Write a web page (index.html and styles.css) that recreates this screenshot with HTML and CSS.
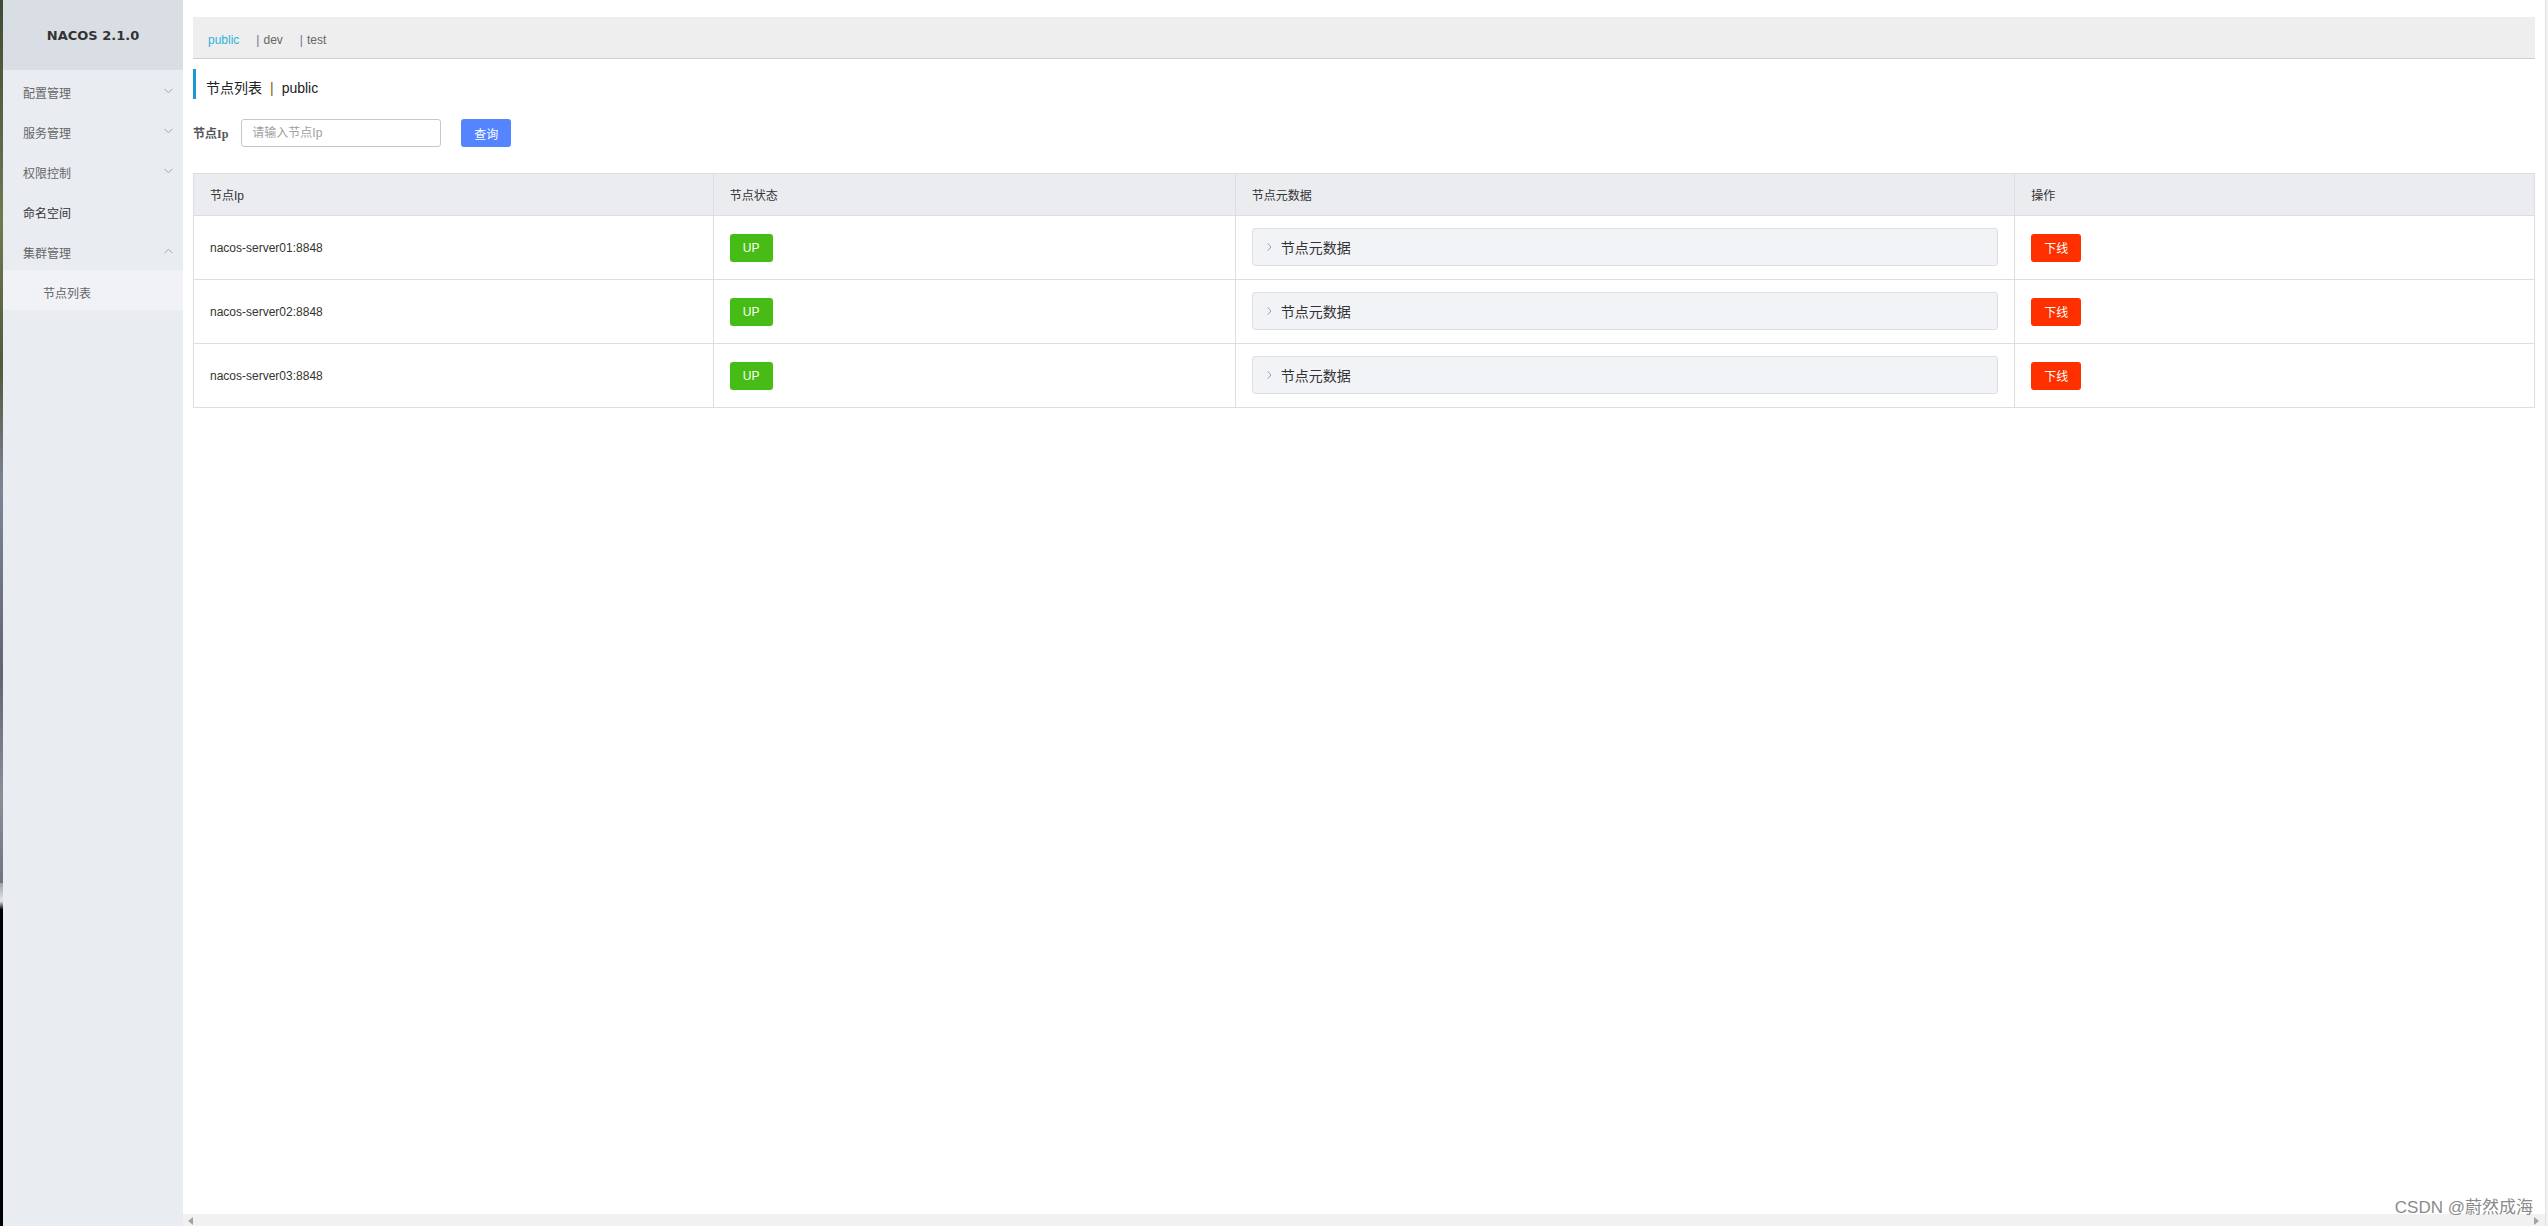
FILE: index.html
```html
<!DOCTYPE html>
<html lang="zh-CN">
<head>
<meta charset="utf-8">
<title>Nacos - 节点列表</title>
<link rel="stylesheet" href="styles.css">
</head>
<body>
<div class="app">
  <div class="desk-strip"></div>
  <aside class="sidebar">
    <div class="brand">NACOS 2.1.0</div>
    <ul class="menu">
      <li class="menu-item"><span>配置管理</span><svg class="chev" width="9" height="6" viewBox="0 0 9 6"><path d="M0.5 0.8 L4.5 4.8 L8.5 0.8" fill="none" stroke="#a0a4ab" stroke-width="1"/></svg></li>
      <li class="menu-item"><span>服务管理</span><svg class="chev" width="9" height="6" viewBox="0 0 9 6"><path d="M0.5 0.8 L4.5 4.8 L8.5 0.8" fill="none" stroke="#a0a4ab" stroke-width="1"/></svg></li>
      <li class="menu-item"><span>权限控制</span><svg class="chev" width="9" height="6" viewBox="0 0 9 6"><path d="M0.5 0.8 L4.5 4.8 L8.5 0.8" fill="none" stroke="#a0a4ab" stroke-width="1"/></svg></li>
      <li class="menu-item leaf"><span>命名空间</span></li>
      <li class="menu-item"><span>集群管理</span><svg class="chev" width="9" height="6" viewBox="0 0 9 6"><path d="M0.5 5.2 L4.5 1.2 L8.5 5.2" fill="none" stroke="#a0a4ab" stroke-width="1"/></svg></li>
      <li class="sub-item">节点列表</li>
    </ul>
  </aside>
  <main class="main">
    <div class="content">
      <div class="ns-bar">
        <span class="ns active">public</span>
        <span class="ns"><span class="pipe">|</span>dev</span>
        <span class="ns"><span class="pipe">|</span>test</span>
      </div>
      <div class="page-title">
        <span class="title-text">节点列表<span class="title-sep">|</span>public</span>
      </div>
      <form class="search">
        <label class="search-label">节点Ip</label>
        <input class="search-input" type="text" placeholder="请输入节点Ip">
        <button class="btn-primary" type="button">查询</button>
      </form>
      <table class="grid">
        <colgroup>
          <col class="c1"><col class="c2"><col class="c3"><col class="c4">
        </colgroup>
        <thead>
          <tr><th>节点Ip</th><th>节点状态</th><th>节点元数据</th><th>操作</th></tr>
        </thead>
        <tbody>
          <tr>
            <td>nacos-server01:8848</td>
            <td><span class="tag-up">UP</span></td>
            <td><div class="meta"><svg class="meta-chev" width="5" height="8" viewBox="0 0 5 8"><path d="M0.8 0.5 L4 4 L0.8 7.5" fill="none" stroke="#9a9ea6" stroke-width="1"/></svg><span>节点元数据</span></div></td>
            <td><button class="btn-danger" type="button">下线</button></td>
          </tr>
          <tr>
            <td>nacos-server02:8848</td>
            <td><span class="tag-up">UP</span></td>
            <td><div class="meta"><svg class="meta-chev" width="5" height="8" viewBox="0 0 5 8"><path d="M0.8 0.5 L4 4 L0.8 7.5" fill="none" stroke="#9a9ea6" stroke-width="1"/></svg><span>节点元数据</span></div></td>
            <td><button class="btn-danger" type="button">下线</button></td>
          </tr>
          <tr>
            <td>nacos-server03:8848</td>
            <td><span class="tag-up">UP</span></td>
            <td><div class="meta"><svg class="meta-chev" width="5" height="8" viewBox="0 0 5 8"><path d="M0.8 0.5 L4 4 L0.8 7.5" fill="none" stroke="#9a9ea6" stroke-width="1"/></svg><span>节点元数据</span></div></td>
            <td><button class="btn-danger" type="button">下线</button></td>
          </tr>
        </tbody>
      </table>
    </div>
    <div class="hscroll">
      <svg width="5" height="8" viewBox="0 0 5 8"><path d="M5 0 L0 4 L5 8 Z" fill="#a3a3a3"/></svg>
      <svg width="5" height="8" viewBox="0 0 5 8"><path d="M0 0 L5 4 L0 8 Z" fill="#a3a3a3"/></svg>
    </div>
  </main>
  <div class="vscroll"></div>
  <div class="watermark">CSDN @蔚然成海</div>
</div>
</body>
</html>
```
FILE: styles.css
```css
* { box-sizing: border-box; }
html, body { margin: 0; padding: 0; }
body {
  font-family: "Liberation Sans", "Noto Sans CJK SC", sans-serif;
  font-size: 12px;
  color: #333;
  background: #fff;
}
.app {
  position: relative;
  display: flex;
  height: 1226px;
  overflow: hidden;
}
.desk-strip {
  width: 3px;
  flex: none;
  background: linear-gradient(180deg, #3f4a35 0%, #6d7a52 18%, #4e5a3c 30%, #7c8596 40%, #5f6672 55%, #8a8f98 65%, #6e7480 72%, #9ea2a8 72%, #e6e6e6 73.5%, #000 74.2%, #000 100%);
}
.sidebar {
  width: 180px;
  flex: none;
  background: #e9edf2;
  display: flex;
  flex-direction: column;
}
.brand {
  height: 70px;
  background: #d9dde4;
  display: flex;
  align-items: center;
  justify-content: center;
  font-family: "DejaVu Sans", "Liberation Sans", sans-serif;
  font-weight: bold;
  font-size: 13px;
  color: #333;
}
.menu {
  list-style: none;
  margin: 0;
  padding: 0;
}
.menu-item {
  height: 40px;
  padding: 5px 10px 0 20px;
  display: flex;
  align-items: center;
  justify-content: space-between;
  color: #666;
  font-size: 12px;
}
.menu-item.leaf { color: #333; }
.chev { margin-bottom: 4px; }
.sub-item {
  height: 40px;
  padding: 5px 0 0 40px;
  display: flex;
  align-items: center;
  background: #f0f2f6;
  color: #666;
  font-size: 12px;
}
.main {
  flex: 1;
  display: flex;
  flex-direction: column;
  min-width: 0;
}
.content {
  flex: 1;
  padding: 17px 10px 0;
}
.ns-bar {
  height: 42px;
  background: #eeeeee;
  border-bottom: 1px solid #cfcfcf;
  display: flex;
  align-items: center;
  padding: 4px 15px 0;
  gap: 17px;
  font-size: 12px;
  color: #666;
}
.ns.active { color: #2fb3d8; }
.pipe { color: #6a7390; margin-right: 4px; }
.page-title {
  margin-top: 10px;
  height: 30px;
  border-left: 3px solid #189ad3;
  padding-left: 10px;
}
.title-text {
  display: block;
  padding-top: 8px;
  line-height: 22px;
  font-size: 14px;
  color: #222;
}
.title-sep { margin: 0 8px; color: #7a5a20; }
.search {
  margin: 20px 0 0;
  display: flex;
  align-items: center;
  height: 28px;
}
.search-label {
  font-family: "Liberation Serif", "Noto Sans CJK SC", serif;
  font-weight: bold;
  font-size: 12px;
  color: #555;
  margin-right: 13px;
}
.search-input {
  width: 200px;
  height: 28px;
  border: 1px solid #c4c6cf;
  border-radius: 3px;
  padding: 0 10px;
  font-family: inherit;
  font-size: 12px;
  color: #333;
  outline: none;
}
.search-input::placeholder { color: #a0a0a0; }
.btn-primary {
  margin-left: 20px;
  width: 50px;
  height: 28px;
  border: none;
  border-radius: 3px;
  background: #5584ff;
  color: #fff;
  font-family: inherit;
  font-size: 12px;
  padding: 0;
}
.grid {
  margin-top: 26px;
  width: 100%;
  table-layout: fixed;
  border-collapse: separate;
  border-spacing: 0;
  border-top: 1px solid #dcdee3;
  border-left: 1px solid #dcdee3;
}
.c1 { width: 22.2%; }
.c2 { width: 22.3%; }
.c3 { width: 33.3%; }
.c4 { width: 22.2%; }
.grid th, .grid td {
  border-right: 1px solid #dcdee3;
  border-bottom: 1px solid #dcdee3;
  padding: 0 16px;
  text-align: left;
  vertical-align: middle;
  font-size: 12px;
  color: #333;
}
.grid th {
  height: 42px;
  background: #ebecf0;
  font-weight: normal;
}
.grid td { height: 64px; }
.tag-up {
  display: inline-flex;
  align-items: center;
  justify-content: center;
  width: 43px;
  height: 28px;
  border-radius: 3px;
  background: #46bc15;
  color: #fff;
  font-size: 12px;
  vertical-align: middle;
}
.meta {
  height: 38px;
  margin-top: -1px;
  background: #f2f3f7;
  border: 1px solid #dcdee3;
  border-radius: 3px;
  display: flex;
  align-items: center;
  padding-left: 14px;
  font-size: 14px;
  color: #333;
}
.meta-chev { margin-right: 9px; }
.btn-danger {
  width: 50px;
  height: 28px;
  border: none;
  border-radius: 3px;
  background: #ff3000;
  color: #fff;
  font-family: inherit;
  font-size: 12px;
  padding: 0;
  vertical-align: middle;
}
.hscroll {
  height: 12px;
  flex: none;
  background: #f1f1f1;
  display: flex;
  align-items: center;
  justify-content: space-between;
  padding: 2px 6px 0 5px;
}
.vscroll {
  width: 3px;
  flex: none;
  background: #f1f1f1;
  border-left: 1px solid #e2e2e2;
}
.watermark {
  position: absolute;
  right: 15px;
  bottom: 8px;
  font-size: 17px;
  line-height: 20px;
  color: #8a8a8a;
  text-shadow: 0 0 1px #fff;
}
```
